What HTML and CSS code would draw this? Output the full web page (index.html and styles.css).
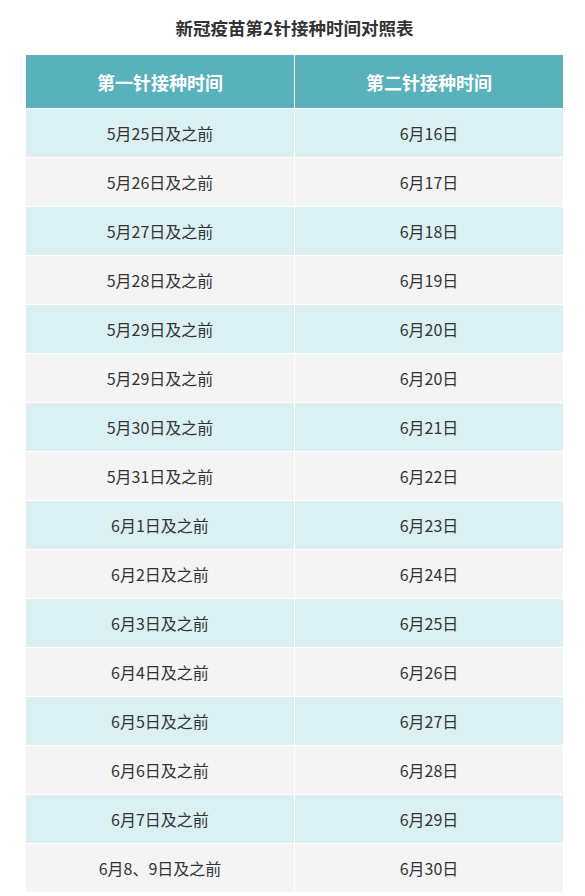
FILE: index.html
```html
<!DOCTYPE html>
<html lang="zh-CN">
<head>
<meta charset="utf-8">
<title>新冠疫苗第2针接种时间对照表</title>
<link rel="stylesheet" href="styles.css">
</head>
<body>
<div class="page">
  <h1 class="title">新冠疫苗第2针接种时间对照表</h1>
  <div class="grid">
    <div class="cell head">第一针接种时间</div>
    <div class="cell head">第二针接种时间</div>
    <div class="cell odd">5月25日及之前</div><div class="cell odd">6月16日</div>
    <div class="cell even">5月26日及之前</div><div class="cell even">6月17日</div>
    <div class="cell odd">5月27日及之前</div><div class="cell odd">6月18日</div>
    <div class="cell even">5月28日及之前</div><div class="cell even">6月19日</div>
    <div class="cell odd">5月29日及之前</div><div class="cell odd">6月20日</div>
    <div class="cell even">5月29日及之前</div><div class="cell even">6月20日</div>
    <div class="cell odd">5月30日及之前</div><div class="cell odd">6月21日</div>
    <div class="cell even">5月31日及之前</div><div class="cell even">6月22日</div>
    <div class="cell odd">6月1日及之前</div><div class="cell odd">6月23日</div>
    <div class="cell even">6月2日及之前</div><div class="cell even">6月24日</div>
    <div class="cell odd">6月3日及之前</div><div class="cell odd">6月25日</div>
    <div class="cell even">6月4日及之前</div><div class="cell even">6月26日</div>
    <div class="cell odd">6月5日及之前</div><div class="cell odd">6月27日</div>
    <div class="cell even">6月6日及之前</div><div class="cell even">6月28日</div>
    <div class="cell odd">6月7日及之前</div><div class="cell odd">6月29日</div>
    <div class="cell even">6月8、9日及之前</div><div class="cell even">6月30日</div>
  </div>
</div>
</body>
</html>
```
FILE: styles.css
```css
html, body {
  margin: 0;
  padding: 0;
  background: #ffffff;
}
body {
  font-family: "Noto Sans CJK SC", "Noto Sans", sans-serif;
  color: #333333;
}
.page {
  padding: 0 22px 0 26px;
}
.title {
  margin: 0;
  height: 55px;
  display: flex;
  align-items: center;
  justify-content: center;
  font-size: 17.5px;
  font-weight: 700;
  color: #333333;
}
.grid {
  display: grid;
  grid-template-columns: 1fr 1fr;
  gap: 1px;
  background: #ffffff;
}
.cell {
  display: flex;
  align-items: center;
  justify-content: center;
  height: 48px;
  font-size: 16px;
  color: #333333;
}
.head {
  height: 53px;
  background: #59b1bb;
  color: #ffffff;
  font-size: 18px;
  font-weight: 700;
}
.odd {
  background: #daf0f3;
}
.even {
  background: #f4f4f4;
}
```
